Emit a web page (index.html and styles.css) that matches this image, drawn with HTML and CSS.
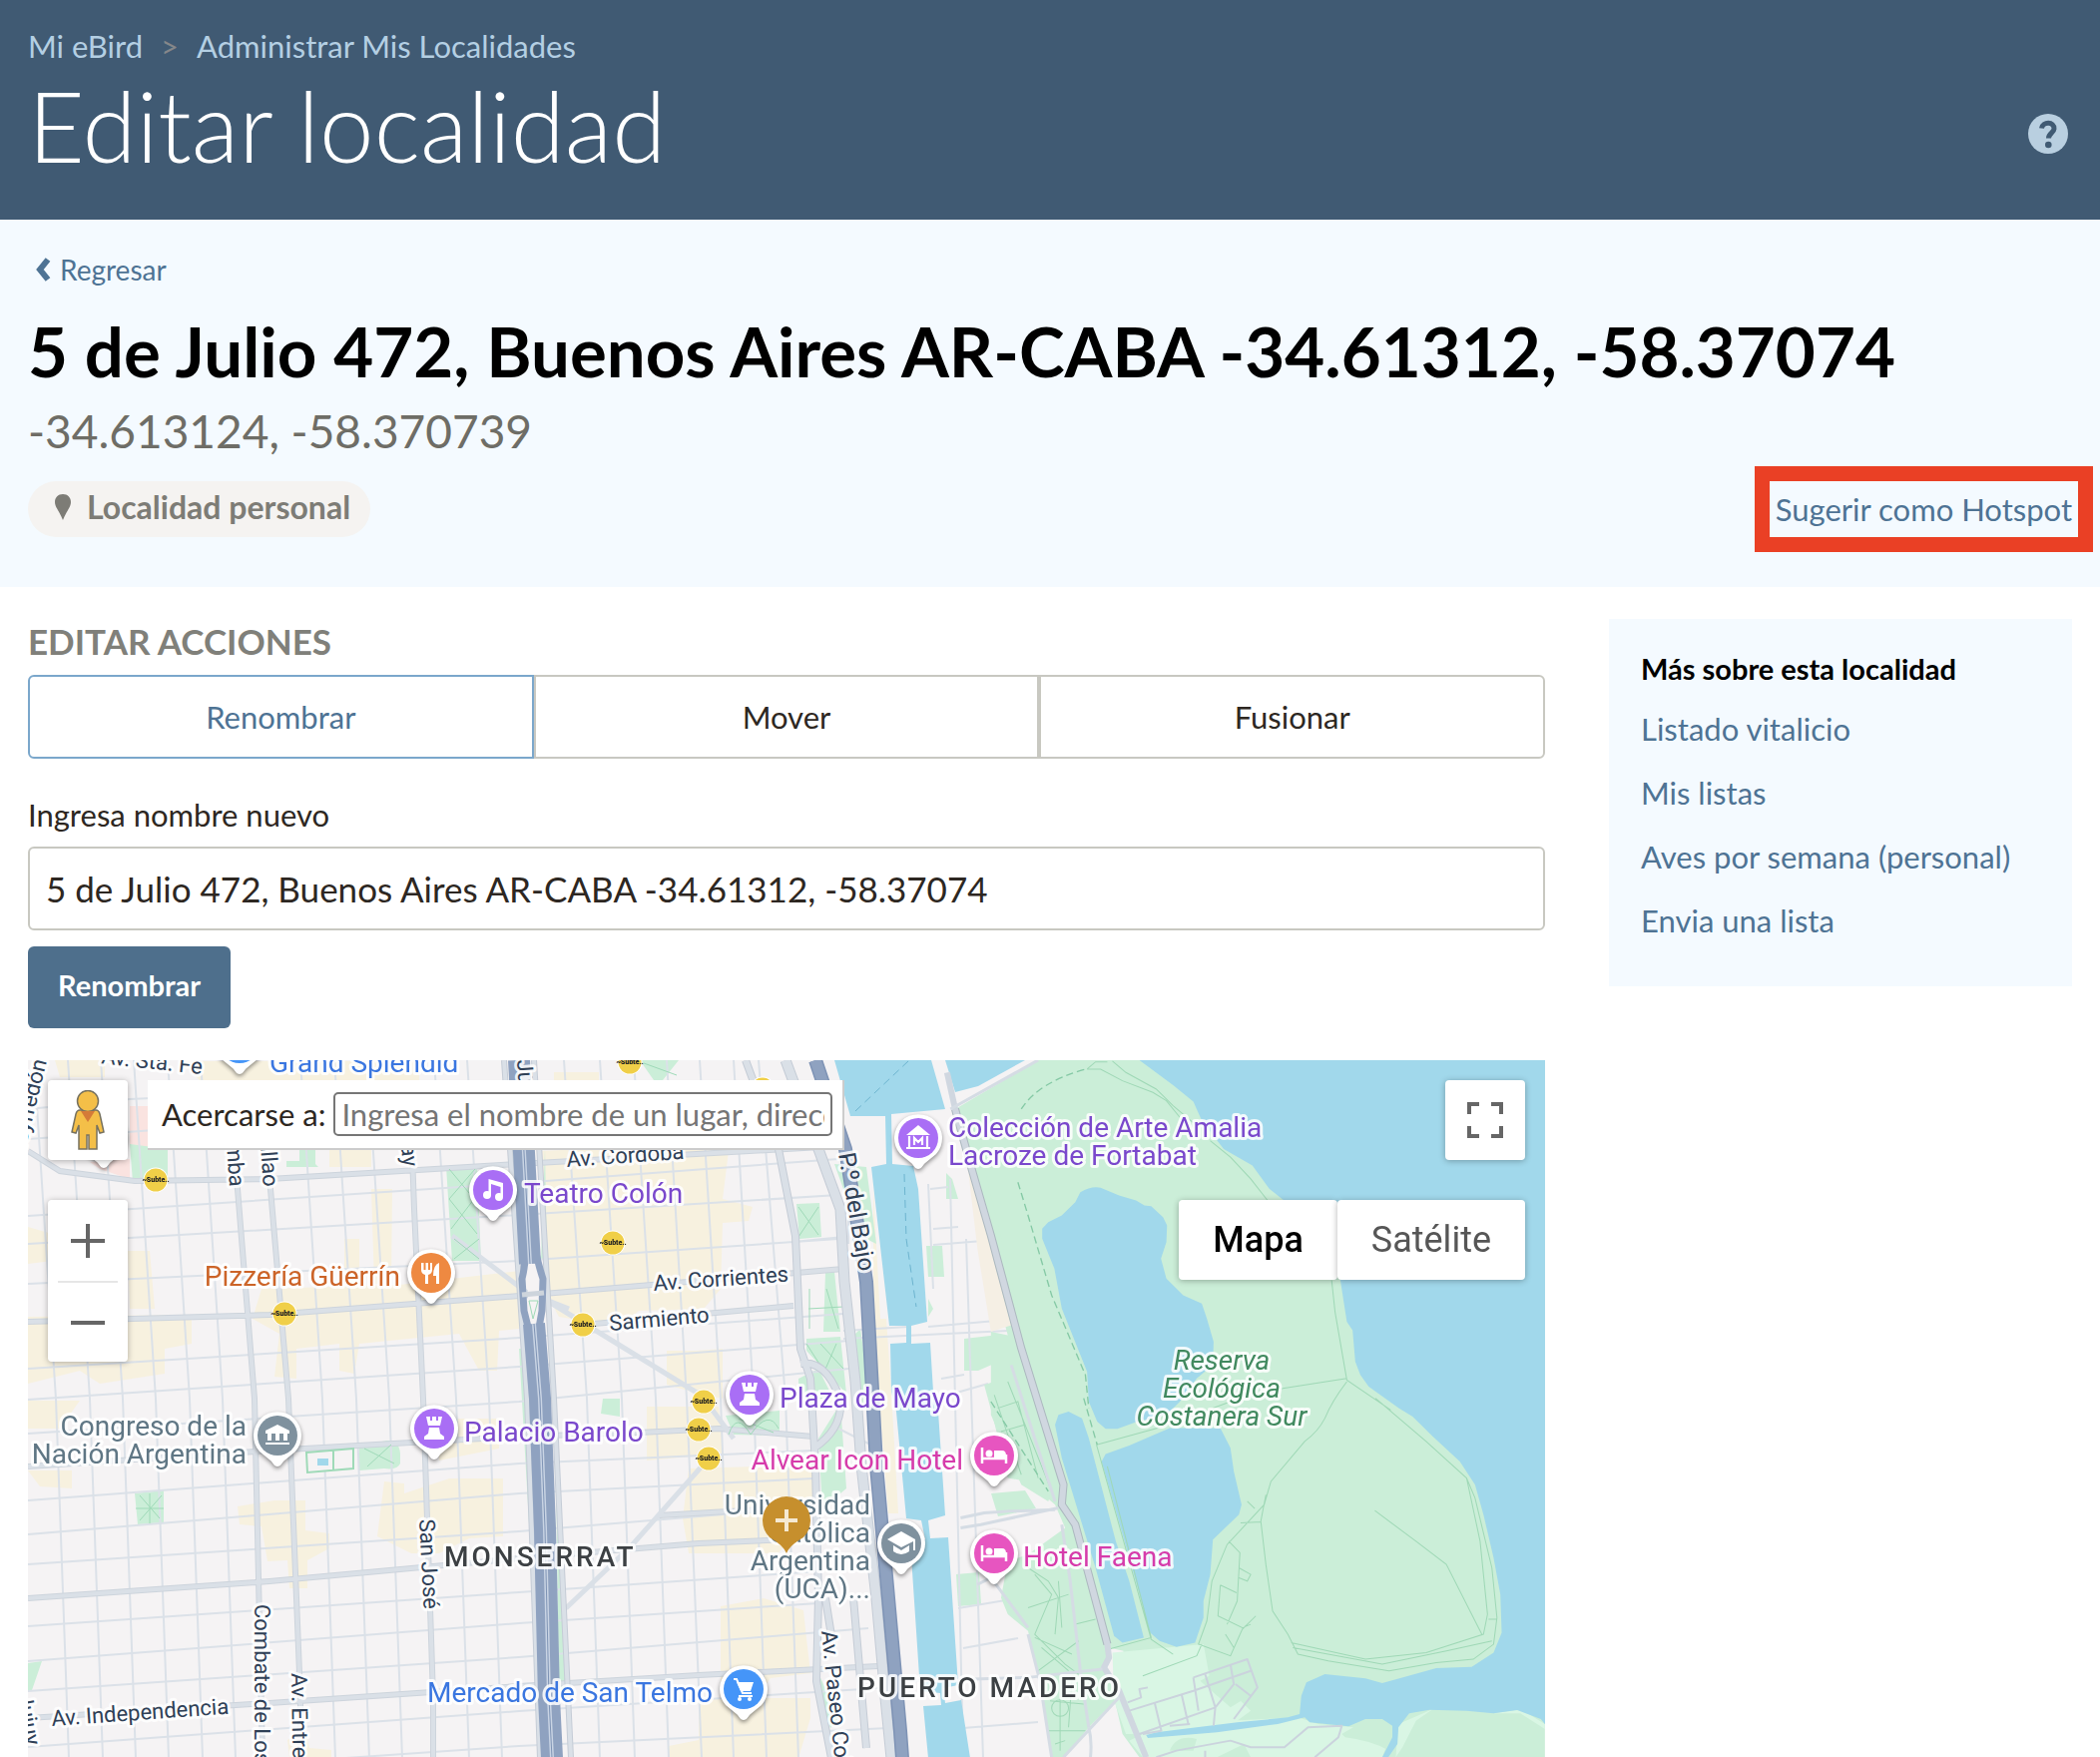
FILE: index.html
```html
<!DOCTYPE html>
<html lang="es">
<head>
<meta charset="utf-8">
<title>Editar localidad - eBird</title>
<meta name="viewport" content="width=device-width, initial-scale=1">
<link rel="stylesheet" href="styles.css">
</head>
<body>
<header class="masthead">
  <div>
    <nav class="crumbs" aria-label="Ruta">
      <a href="#">Mi eBird</a><span class="crumb-sep">&gt;</span><a href="#">Administrar Mis Localidades</a>
    </nav>
    <h1 class="page-title">Editar localidad</h1>
  </div>
  <a class="help" href="#" aria-label="Ayuda">
    <svg viewBox="0 0 40 40" width="40" height="40"><circle cx="20" cy="20" r="20" fill="#b9cfe0"/><path d="M13.500 14.500C14.500 7.500 26.500 7.500 26 15C25.700 19 20.500 19.500 20.500 24.500" fill="none" stroke="#405a73" stroke-width="5"/><circle cx="20.300" cy="31" r="3.300" fill="#405a73"/></svg>
  </a>
</header>

<section class="place">
  <a class="back" href="#"><svg viewBox="0 0 18 24" width="18" height="24"><path d="M14 2L6 12L14 22" fill="none" stroke="#4e7394" stroke-width="6"/></svg>Regresar</a>
  <h2 class="place-name">5 de Julio 472, Buenos Aires AR-CABA -34.61312, -58.37074</h2>
  <p class="place-coords">-34.613124, -58.370739</p>
  <div class="place-row">
    <span class="pill"><svg viewBox="0 0 16 26" width="16" height="26"><path d="M8 0C12.800 0 16 3.500 16 8C16 13 11 18 8 26C5 18 0 13 0 8C0 3.500 3.200 0 8 0Z" fill="#7d7c76"/></svg>Localidad personal</span>
    <a class="suggest" href="#">Sugerir como Hotspot</a>
  </div>
</section>

<div class="columns">
<main class="editor">
  <h3 class="section-title">Editar acciones</h3>
  <div class="tabs">
    <button type="button" class="tab tab-on">Renombrar</button>
    <button type="button" class="tab">Mover</button>
    <button type="button" class="tab">Fusionar</button>
  </div>
  <form class="rename">
    <label for="name">Ingresa nombre nuevo</label>
    <input id="name" type="text" value="5 de Julio 472, Buenos Aires AR-CABA -34.61312, -58.37074">
    <button type="submit" class="submit">Renombrar</button>
  </form>

  <div class="map">
    <svg class="map-canvas" viewBox="28 1061 1520 699" preserveAspectRatio="xMidYMin slice">
      <defs>
        <path id="pin" d="M0 31C-3 31-4 28-7 25L-18 16A24 24 0 1 1 18 16L7 25C4 28 3 31 0 31Z"/>
        <g id="subte"><circle r="12.500" fill="#fff"/><circle r="11.500" fill="#f0cf48"/><text class="subte-text" text-anchor="middle" y="2">~Subte..</text></g>
        <g id="rook"><path d="M-8-12H-4V-8H-2V-12H2V-8H4V-12H8L6-3H-6ZM-5-1H5L6 5L10 8V11H-10V8L-6 5Z" fill="#fff"/></g>
        <g id="bed"><path d="M-12-8V8M12 8V-1M-12 3H12" fill="none" stroke="#fff" stroke-width="2.500"/><path d="M0 3V-5H8Q12-5 12 0V3Z" fill="#fff"/><circle cx="-5" cy="-2" r="3.500" fill="#fff"/></g>
      </defs>
      <rect x="28" y="1061" width="1520" height="699" fill="#f5f3f4"/>

      <g fill="#f7f1df">
        <path d="M28 1318L192 1316V1345L165 1350V1375L100 1385L80 1372L28 1385ZM28 1228L52 1235V1262L28 1265ZM128 1252H150L155 1310H130Z"/>
        <path d="M262 1290L400 1286L520 1272V1330L500 1332L498 1372H480L460 1335L360 1345L355 1375L340 1372V1345L297 1350V1380L275 1378L280 1335L253 1320ZM372 1190H393L392 1285H375ZM345 1240H360V1285H345ZM330 1150H372V1168H330Z"/>
        <path d="M540 1152L700 1145L730 1152L724 1200L754 1208L750 1222L724 1224L722 1290L705 1310L640 1312L620 1328L560 1318L545 1290ZM668 1352H697L724 1350V1400L700 1395L668 1386Z"/>
        <path d="M648 1408H720L725 1455L648 1462ZM690 1470L815 1466L820 1500L780 1555L690 1555L684 1520ZM722 1608L765 1600L805 1612L808 1640L812 1675L772 1680L765 1690L722 1690ZM700 1700H812V1720L800 1760H670V1748L700 1742Z"/>
        <path d="M238 1508L275 1502H306V1532L330 1535V1550L308 1562V1590H290L288 1562L268 1563L262 1528L240 1526ZM385 1483L405 1485V1495L450 1480H504V1538L470 1540L440 1555H412L378 1538ZM28 1402H80L60 1430H28ZM28 1472H72V1490L40 1488ZM435 1420H500V1450L440 1462ZM288 1742L305 1730L310 1750L332 1752V1760H290ZM55 1061H105V1078H60ZM180 1062H420V1081H200ZM555 1073H600V1085H555ZM875 1190L882 1320H888L893 1393L900 1515H890L875 1330Z"/>
      </g>
      <path d="M130 1107H148V1150L130 1145ZM90 1163L130 1160V1180L100 1170Z" fill="#fae3e0"/>
      <g fill="#cbeed8">
        <path d="M447 1167H478L482 1262H453ZM130 1145L168 1150V1180L133 1183ZM135 1495L164 1492V1524L138 1526ZM28 1665L42 1663L32 1692H28ZM300 1150H316V1165L319 1168H287V1162H300ZM604 1400H621V1418L602 1415ZM641 1061H680L664 1081H655ZM798 1205L821 1204L823 1238L801 1240ZM827 1273L836 1273L842 1333H825ZM808 1340L842 1338L848 1395L808 1352ZM800 1380L820 1370L835 1400H800ZM727 1417L781 1412V1437L735 1436ZM820 1440L842 1405L848 1490L824 1510ZM820 1675L840 1720L832 1730L818 1695ZM836 1165L868 1168L878 1245L868 1240L845 1190ZM852 1340L862 1330L872 1400L858 1410Z"/>
        <path d="M360 1447L388 1442Q400 1442 401 1455V1465Q398 1472 385 1470L360 1472ZM928 1247H944L946 1278H930ZM966 1340L1001 1336L996 1365L980 1372H966ZM993 1495L1027 1492L1038 1510L1000 1518ZM958 1576L981 1574L983 1606L960 1608ZM948 1174L954 1180L960 1200H948ZM930 1300L935 1310L930 1318Z"/>
        <path d="M530 1150H514L518 1260H524ZM546 1150L548 1260H542ZM520 1350H526L538 1560H532ZM556 1400L567 1700H560ZM528 1340L533 1430H528Z"/>
      </g>

      <g class="street">
        <path d="M34 1061L56 1400L69 1760M68 1061L90 1400L103 1760M101 1061L123 1400L136 1760M134 1061L156 1400L169 1760M168 1061L190 1400L203 1760M201 1061L223 1400L236 1760M301 1061L323 1400L336 1760M335 1061L357 1400L370 1760M368 1061L390 1400L403 1760M435 1061L457 1400L470 1760M468 1061L490 1400L503 1760M565 1061L588 1400L601 1760M601 1061L623 1400L636 1760M635 1061L657 1400L670 1760M668 1061L688 1400L703 1760M701 1061L722 1400L735 1760M735 1061L755 1400L768 1760M760 1061L787 1400L800 1760"/>
        <path d="M28 1110L130 1100L520 1082M28 1140L240 1125M28 1217L520 1184L840 1160M28 1245L520 1216L840 1196M28 1285L520 1262L840 1240M28 1370L520 1339L845 1315M28 1401L520 1368L850 1342M28 1435L520 1403L850 1370M28 1502L520 1465L815 1452M28 1536L520 1495L815 1480M28 1566L520 1533L820 1508M28 1628L520 1594L820 1573M28 1663L520 1625L820 1605M28 1693L520 1659L870 1630M28 1749L520 1713L880 1690M28 1782L520 1748L890 1730M845 1332L910 1328M930 1328L1020 1320M845 1340L1010 1332M955 1395L990 1385M935 1230L960 1228M932 1190L950 1188M952 1180L965 1760M930 1185L935 1290M968 1240L985 1760M935 1246L985 1242M960 1610L1020 1600M965 1650L1020 1640M965 1730L1040 1724M943 1380L966 1376M795 1243L845 1238M840 1430L870 1445M850 1200L850 1245M790 1110L840 1105"/>
      </g>
      <g class="avenue-edge">
        <path d="M28 1152L60 1172L135 1182L270 1180L520 1165L840 1147M28 1323L270 1316L520 1297L845 1270M584 1326L795 1307M28 1468L270 1452L520 1438L640 1434L720 1430L815 1438M28 1600L270 1583L520 1560L700 1545L815 1540M660 1517L815 1508M28 1720L270 1705L520 1688L700 1677L880 1668M222 1100L238 1190L255 1400L263 1760M262 1100L271 1190L289 1400L301 1700V1760M411 1100L415 1210L424 1400L434 1700V1760"/>
      </g>
      <g class="avenue">
        <path d="M28 1152L60 1172L135 1182L270 1180L520 1165L840 1147M28 1323L270 1316L520 1297L845 1270M584 1326L795 1307M28 1468L270 1452L520 1438L640 1434L720 1430L815 1438M28 1600L270 1583L520 1560L700 1545L815 1540M660 1517L815 1508M28 1720L270 1705L520 1688L700 1677L880 1668M222 1100L238 1190L255 1400L263 1760M262 1100L271 1190L289 1400L301 1700V1760M411 1100L415 1210L424 1400L434 1700V1760"/>
        <path d="M550 1303L703 1397L735 1440M453 1237L527 1293L570 1310M710 1460L633 1547L567 1610" stroke-width="5"/>
      </g>
      <path d="M307 1454L354 1450V1470L308 1474ZM334 1452V1472" fill="#f5f3f4" stroke="#9fdab8" stroke-width="2"/>
      <path d="M318 1460H329V1467H318Z" fill="#a1d8eb"/>
      <path class="trail" d="M450 1170L475 1200L452 1230M476 1170L450 1200L478 1235M455 1240L480 1260M480 1240L455 1260M140 1497L160 1520M162 1497L140 1522M150 1495V1525M136 1510H164M800 1208L820 1236M820 1208L800 1238M365 1450L395 1465M368 1468L392 1446M730 1436Q738 1412 752 1436Q770 1410 780 1430M740 1420L775 1434M828 1290L840 1330M808 1345L840 1395M645 1064L678 1076M810 1310L845 1308M811 1330V1290M822 1345L845 1370M838 1345L825 1375"/>

      <g fill="none" stroke-linejoin="round">
        <g stroke="#c5ccd6">
          <path d="M787 1061L820 1150L842 1210L846 1283L857 1383L863 1467L878 1600L887 1700L893 1760" stroke-width="11"/>
          <path d="M747 1061L780 1150L797 1237L802 1350L812 1380L817 1467L820 1600L818 1683L833 1760M802 1365Q830 1360 845 1410M815 1450Q845 1430 842 1400M827 1600L835 1650M855 1600L868 1750" stroke-width="8"/>
          <path d="M505 1061L528 1400L541 1760M535 1061L555 1400L572 1760" stroke-width="6"/>
        </g>
        <g stroke="#dae0e7">
          <path d="M787 1061L820 1150L842 1210L846 1283L857 1383L863 1467L878 1600L887 1700L893 1760" stroke-width="9"/>
          <path d="M747 1061L780 1150L797 1237L802 1350L812 1380L817 1467L820 1600L818 1683L833 1760M802 1365Q830 1360 845 1410M815 1450Q845 1430 842 1400M827 1600L835 1650M855 1600L868 1750" stroke-width="6"/>
          <path d="M505 1061L528 1400L541 1760M535 1061L555 1400L572 1760" stroke-width="4"/>
        </g>
        <path d="M527 1250Q526 1268 523 1280L525 1312L532 1340M536 1250Q540 1268 544 1280L543 1312L538 1340" stroke="#8fa2c0" stroke-width="7"/>
        <path d="M534 1266L540 1285L539 1308L534 1322L529 1308V1285Z" fill="#f5f3f4"/>
        <path d="M530 1302H539L534 1320Z" fill="#f5f3f4" stroke="#9fdab8"/>
        <path d="M523 1296L545 1294" stroke="#cdd4dc" stroke-width="5"/>
        <path d="M520 1061L531 1265M535 1325L541 1400L546 1530L550 1700L553 1760" stroke="#8fa2c0" stroke-width="22"/>
        <path d="M520 1061L531 1265M535 1325L541 1400L546 1530L550 1700L553 1760" stroke="#c9d4e4" stroke-width="4"/>
        <path d="M520 1061L531 1265M535 1325L541 1400L546 1530L550 1700L553 1760" stroke="#7e93b4" stroke-width="1"/>
        <path d="M817 1061L847 1150L863 1250L868 1283L875 1410L878 1467L890 1600L902 1733L904 1760" stroke="#7e93b5" stroke-width="14"/>
        <path d="M817 1061L847 1150L863 1250L868 1283L875 1410L878 1467L890 1600L902 1733L904 1760" stroke="#8fa2c0" stroke-width="11"/>
      </g>

      <g fill="#a1d8eb">
        <path d="M836 1061H933L947 1110L893 1115L894 1165L915 1167L920 1190L929 1323L913 1327V1345L932 1344L935 1393L940 1413L947 1517L930 1522L932 1540L950 1539L960 1687L945 1690L947 1705L963 1702L972 1760H930L925 1708L943 1707L942 1695L922 1693L912 1543L927 1541L923 1522L908 1520L898 1413L893 1393L892 1345L908 1344V1327L891 1327L873 1168L888 1165L887 1117L852 1117Z"/>
        <path d="M947 1061H1027L980 1087L957 1093Z"/>
      </g>
      <path d="M857 1112L911 1061M906 1175L908 1240L918 1308" fill="none" stroke="#6db4cf" stroke-width="1" stroke-dasharray="8 5"/>

      <g transform="translate(1030 1050) scale(.338 .333)">
        <path d="M-216 180L30 33H1532V2130H330L280 2060L255 1950L283 1810L240 1800L230 1860L270 1950L180 2040L110 2130H70L30 1880L0 1750L-60 1700L-80 1650L-60 1540L0 1520L110 1440L80 1370L0 1300L-60 1290L-110 1080L-30 980Z" fill="#cbeed8"/>
        <path d="M-130 1010L-40 980L20 1300L-60 1270Z" fill="#cbeed8"/>
        <path d="M250 1815L520 1790L540 1900L600 1930L660 1990L620 2020L350 2060L290 2060L255 1960ZM400 2030L800 2010L860 2030L1080 2050L1050 2130H340L300 2080ZM1090 2130L1098 2030L1200 1985L1150 2020L1110 2100ZM1380 1998L1460 1985L1532 2030V2045L1460 1998Z" fill="#d9f6e4"/>
        <path d="M510 1900L600 1850L680 1930L600 1980ZM930 2060L980 2030Q1080 2000 1080 2050L1070 2110Q1020 2080 940 2070ZM420 2110Q440 2060 500 2075L490 2110ZM560 2130L640 2090L660 2130Z" fill="#cbeed8"/>
        <path d="M330 33L430 108L490 158L515 215L580 300L665 350L715 420L755 452L900 560L925 690L945 820L962 845L970 940L985 980L1010 1015L1100 1080L1140 1105L1200 1165L1280 1240L1325 1310L1350 1400L1380 1530L1400 1640L1404 1755L1380 1815L1315 1858L1210 1862L1050 1907L1000 1893L880 1880L825 1905L810 1945L805 2000L770 2010L620 2025L380 2055L350 2063L355 2072L560 2055L740 2030L820 2010L835 2025L950 2037L1000 2015L1050 2015L1080 2035L1080 2070L1050 2130H1068L1095 2090L1098 2040L1130 1998L1190 1987L1300 1990L1380 1998L1450 1988L1520 2015L1540 2040V33Z" fill="#a1d8eb"/>
        <g fill="#a1d8eb">
          <path d="M42 540L60 520L100 500L140 460L155 430Q190 410 215 417L270 440L320 455L345 470L365 472L400 505L412 530L410 580L394 630L410 690L460 740L515 765L530 810L550 880L548 950L500 990L450 1060L420 1090L380 1110L330 1118L265 1142L230 1142L205 1120L180 1060L175 970L100 780L78 660L42 570Z"/>
          <path d="M80 1130L90 1100L120 1090L160 1110L180 1170L260 1480L300 1600L343 1770L280 1785L255 1765L200 1560L100 1230Z"/>
          <path d="M218 1240L230 1218L300 1192L420 1140L570 1140L600 1200L610 1270L633 1370L625 1400L548 1475L540 1580L520 1660V1710L495 1785L440 1798L390 1780L362 1755L300 1530Z"/>
        </g>
        <path d="M-204 180L-150 200L-120 400L0 900L25 1050L75 1310L60 1360L-20 1310L-110 1100L-110 850L-60 860L-140 560Z" fill="#cbeed8"/>
        <path d="M-185 300L-150 450L-50 830L-110 850L-150 600Z" fill="#f5efe4"/>
        <g fill="none" stroke="#9fd8b6" stroke-width="3">
          <path d="M175 60L200 38H235M250 36L290 70L380 120L430 170L500 230M175 60L215 60L280 95L370 130L410 155L450 205M540 275L600 325L660 390L710 455M900 695L910 790L945 995L1075 1085M945 990L755 1020L600 1060L400 1135L203 1190M945 1000Q900 1060 880 1110Q860 1150 820 1180L720 1300L700 1370L590 1490L545 1600L530 1720L505 1790L600 1825L635 1745L675 1705M705 1340L690 1420L705 1550L725 1690L770 1760L800 1820L890 1840L1070 1870L1210 1845L1320 1835L1380 1790L1390 1710L1375 1560L1325 1350L1300 1290L1180 1180L1030 1050M780 1785L1000 1835L1180 1815L1350 1760L1362 1700L1340 1480L1300 1290M1028 1388L1150 1480L1240 1550L1345 1760M595 1480L628 1515L620 1660L590 1730M570 1612L618 1635M570 1612L563 1705L635 1740L660 1730M585 1760L610 1800M203 1190L365 1775L430 1820M235 1255L365 1770L240 1805M340 1885L500 1825L515 1790M625 1560L660 1580L650 1600L625 1590M785 1800L1050 1850L1240 1810L1375 1780M1365 1715H1390M630 1425L690 1422M650 1360L672 1382"/>
          <path d="M0 1560L60 1600L90 1650L80 1760M20 1580L70 1640L20 1760L110 1850L150 1880M0 1680L120 1640M90 1600L100 1740M20 1770L130 1820M40 1800L120 1870M140 1730L200 1715M30 1870L150 1780M60 2050H170M65 1960L165 1970M80 2090L110 2080M95 1900V2110M130 1900L120 2040M-100 1040L-20 1280M-90 1080L-30 1060L30 1290M-60 1000L70 1330M-80 1150L-10 1130"/>
          <circle cx="95" cy="1982" r="25"/>
        </g>
        <path d="M-20 180Q30 100 170 60M-30 400L0 500L70 740L170 980L180 1080M165 1050L205 1190M-110 1060L60 1330" fill="none" stroke="#85c9a5" stroke-width="4" stroke-dasharray="22 12"/>
        <g fill="none" stroke-linejoin="round">
          <path d="M-216 180L-170 350L-110 560L-20 900L35 1080L105 1310L100 1370L140 1430L235 1790" stroke="#acb8bf" stroke-width="24"/>
          <path d="M-240 70L-216 180L-170 350L-110 560L-20 900L35 1080L105 1310L100 1370L140 1430L235 1790L240 1830L225 1860L270 1930L350 2130" stroke="#d0d7e0" stroke-width="18"/>
          <path d="M-230 180L30 33M-50 950L80 1360M-200 1440L-140 1430L90 1380M-200 1410L-130 1395L-60 1390L80 1385M100 1430L125 1600L155 1870L180 2040M0 1760L35 1900L70 2130M-350 1900L0 1890L220 1865M270 1950L105 2130M180 2040Q190 2080 185 2130M-150 1610L-110 1590L0 1740" stroke="#d5dce4" stroke-width="9"/>
          <path d="M300 1990L490 1930L660 1870M330 2060L555 1980L610 1910L600 1850M375 1965L395 2050L340 2060M455 1940L475 2030M490 1890L650 1835L680 1920L610 2015M525 1880L555 1980L550 2035M490 1890L505 1990M295 1965L335 1950L330 1925L355 1920M615 1910L660 1945M420 2035L480 2030M380 2130L440 2110L600 2080L660 2100L760 2100L830 2040L930 2035L920 2070L850 2130M525 2110V2130" stroke="#cbd3dd" stroke-width="6"/>
        </g>
      </g>

      <g class="label road">
        <text transform="translate(655 1292) rotate(-4)">Av. Corrientes</text>
        <text transform="translate(611 1332) rotate(-5)">Sarmiento</text>
        <text transform="translate(568 1168) rotate(-4)">Av. Córdoba</text>
        <text transform="translate(52 1728) rotate(-4)">Av. Independencia</text>
        <text transform="translate(420 1521) rotate(87)">San José</text>
        <text transform="translate(255 1606) rotate(90)">Combate de Los Pozos</text>
        <text transform="translate(292 1675) rotate(89)">Av. Entre Ríos</text>
        <text transform="translate(823 1633) rotate(84)">Av. Paseo Colón</text>
        <text class="road-major" transform="translate(840 1155) rotate(80)">P.º del Bajo</text>
        <text text-anchor="end" transform="translate(230 1188) rotate(86)">Riobamba</text>
        <text text-anchor="end" transform="translate(264 1188) rotate(86)">Callao</text>
        <text text-anchor="end" transform="translate(404 1168) rotate(84)">Uruguay</text>
        <text text-anchor="end" transform="translate(47 1062) rotate(-76)">Pueyrredón</text>
        <text text-anchor="end" transform="translate(202 1075) rotate(6)">Av. Sta. Fe</text>
        <text transform="translate(518 1061) rotate(86)">Julio</text>
        <text text-anchor="end" transform="translate(26 1748) rotate(80)">Jujuy</text>
      </g>

      <g class="pins">
        <use href="#pin" x="240" y="1044"/><use href="#pin" x="104" y="1138"/><use href="#pin" x="494" y="1191"/><use href="#pin" x="432" y="1274"/><use href="#pin" x="920" y="1139"/><use href="#pin" x="751" y="1396"/><use href="#pin" x="435" y="1430"/><use href="#pin" x="278" y="1437"/><use href="#pin" x="996" y="1457"/><use href="#pin" x="996" y="1555"/><use href="#pin" x="903" y="1545"/><use href="#pin" x="745" y="1691"/>
      </g>
      <circle cx="240" cy="1044" r="20" fill="#4595f8"/>
      <circle cx="104" cy="1138" r="20" fill="#7f919e"/>
      <circle cx="494" cy="1191" r="20" fill="#a96ef5"/>
      <g transform="translate(494 1191)" fill="#fff"><circle cx="-6" cy="5" r="4"/><circle cx="6" cy="7" r="4"/><path d="M-4.500 5V-11L10-7V7H7.500V-3L-2-6V5Z"/></g>
      <circle cx="432" cy="1274" r="20" fill="#ee8941"/>
      <path d="M422 1264V1271Q422 1275 426 1276V1285H429V1276Q433 1275 433 1271V1264H431V1271H429V1264H426.500V1271H424.500V1264ZM440 1264Q434 1266 434 1277H437V1285H440Z" fill="#fff"/>
      <circle cx="920" cy="1139" r="20" fill="#a96ef5"/>
      <path d="M911 1137V1149M929 1137V1149M908 1149H932M916 1146V1139L920 1143L924 1139V1146" fill="none" stroke="#fff" stroke-width="2.200"/>
      <path d="M908 1136L920 1126L932 1136Z" fill="#fff"/>
      <circle cx="751" cy="1396" r="20" fill="#a96ef5"/><use href="#rook" x="751" y="1396"/>
      <circle cx="435" cy="1430" r="20" fill="#a96ef5"/><use href="#rook" x="435" y="1430"/>
      <circle cx="278" cy="1437" r="20" fill="#7f919e"/>
      <path d="M266 1432L278 1426L290 1432V1435H266ZM268 1435H272V1442H268ZM276 1435H280V1442H276ZM284 1435H288V1442H284ZM266 1444H290V1446H266Z" fill="#fff"/>
      <circle cx="996" cy="1457" r="20" fill="#e755c0"/><use href="#bed" x="996" y="1457"/>
      <circle cx="996" cy="1555" r="20" fill="#e755c0"/><use href="#bed" x="996" y="1555"/>
      <circle cx="903" cy="1545" r="20" fill="#7f919e"/>
      <path d="M889 1541L903 1533L917 1541V1552H915V1543L903 1549ZM895 1547L903 1552L911 1547V1553Q903 1559 895 1553Z" fill="#fff"/>
      <circle cx="745" cy="1691" r="20" fill="#4595f8"/>
      <path d="M735 1681H738L744 1695H753M740 1698H754" fill="none" stroke="#fff" stroke-width="2"/><path d="M738 1684H755L752 1693H742Z" fill="#fff"/><circle cx="741" cy="1701" r="2" fill="#fff"/><circle cx="751" cy="1701" r="2" fill="#fff"/>

      <use href="#subte" x="156" y="1181"/><use href="#subte" x="285" y="1315"/><use href="#subte" x="631" y="1063"/><use href="#subte" x="764" y="1090"/><use href="#subte" x="614" y="1244"/><use href="#subte" x="584" y="1326"/><use href="#subte" x="705" y="1403"/><use href="#subte" x="700" y="1431"/><use href="#subte" x="710" y="1460"/>

      <g class="label poi">
        <text class="violet" x="525" y="1204">Teatro Colón</text>
        <text class="violet" x="950" y="1138">Colección de Arte Amalia</text>
        <text class="violet" x="950" y="1166">Lacroze de Fortabat</text>
        <text class="violet" x="781" y="1409">Plaza de Mayo</text>
        <text class="violet" x="465" y="1443">Palacio Barolo</text>
        <text class="orange" x="401" y="1287" text-anchor="end">Pizzería Güerrín</text>
        <text class="slate" x="247" y="1437" text-anchor="end">Congreso de la</text>
        <text class="slate" x="247" y="1465" text-anchor="end">Nación Argentina</text>
        <text class="slate" x="872" y="1516" text-anchor="end">Universidad</text>
        <text class="slate" x="872" y="1544" text-anchor="end">Católica</text>
        <text class="slate" x="872" y="1572" text-anchor="end">Argentina</text>
        <text class="slate" x="872" y="1600" text-anchor="end">(UCA)...</text>
        <text class="pink" x="965" y="1471" text-anchor="end">Alvear Icon Hotel</text>
        <text class="pink" x="1025" y="1568">Hotel Faena</text>
        <text class="blue" x="714" y="1704" text-anchor="end">Mercado de San Telmo</text>
        <text class="blue" x="270" y="1073">Grand Splendid</text>
        <text class="reserve" x="1224" y="1371" text-anchor="middle">Reserva</text>
        <text class="reserve" x="1224" y="1399" text-anchor="middle">Ecológica</text>
        <text class="reserve" x="1224" y="1427" text-anchor="middle">Costanera Sur</text>
        <text class="district" x="445" y="1568">MONSERRAT</text>
        <text class="district" x="859" y="1699">PUERTO MADERO</text>
      </g>
      <path d="M788 1555Q785 1547 771 1539A24 24 0 1 1 805 1539Q791 1547 788 1555Z" fill="#c68f2d"/>
      <path d="M777 1522H799M788 1511V1533" stroke="#f5e9d2" stroke-width="4"/>
    </svg>

    <button type="button" class="ctl pegman" aria-label="Arrastra el hombrecito naranja al mapa">
      <svg viewBox="0 0 34 60" width="34" height="60"><g fill="#f4bf48" stroke="#77725f" stroke-width="1.500"><path d="M9 20H25Q28 20 29 24L33 42L29 43L26 35V59H18V45H16V59H8V35L5 43L1 42L5 24Q6 20 9 20Z"/><circle cx="17" cy="11" r="10.500"/></g><path d="M10 21H24L17 32Z" fill="#d47b38"/></svg>
    </button>
    <div class="ctl zoom">
      <button type="button" aria-label="Acercar"><svg viewBox="0 0 34 34" width="34" height="34"><path d="M0 17H34M17 0V34" stroke="#666" stroke-width="4"/></svg></button>
      <button type="button" aria-label="Alejar"><svg viewBox="0 0 34 34" width="34" height="34"><path d="M0 17H34" stroke="#666" stroke-width="4"/></svg></button>
    </div>
    <div class="search">
      <label for="near">Acercarse a:</label>
      <input id="near" type="text" placeholder="Ingresa el nombre de un lugar, dirección">
    </div>
    <button type="button" class="ctl full" aria-label="Pantalla completa">
      <svg viewBox="0 0 36 36" width="36" height="36"><path d="M2 12V2H12M24 2H34V12M34 24V34H24M12 34H2V24" fill="none" stroke="#666" stroke-width="4"/></svg>
    </button>
    <div class="types">
      <button type="button" class="ctl type type-on">Mapa</button>
      <button type="button" class="ctl type">Satélite</button>
    </div>
  </div>
</main>

<aside class="more">
  <h4>Más sobre esta localidad</h4>
  <ul>
    <li><a href="#">Listado vitalicio</a></li>
    <li><a href="#">Mis listas</a></li>
    <li><a href="#">Aves por semana (personal)</a></li>
    <li><a href="#">Envia una lista</a></li>
  </ul>
</aside>
</div>
</body>
</html>
```
FILE: styles.css
```css
*, *::before, *::after { box-sizing: border-box; }
body {
  margin: 0;
  min-height: 100vh;
  display: flex;
  flex-direction: column;
  background: #fff;
  color: #2d2722;
  font-family: Lato, "Open Sans", sans-serif;
  font-size: 31px;
  line-height: 40px;
}
h1, h2, h3, h4, p, ul { margin: 0; padding: 0; }
ul { list-style: none; }
a { color: #4e7394; text-decoration: none; }
button, input { font: inherit; color: inherit; margin: 0; }
button { cursor: pointer; }
svg { display: block; flex: none; }

.masthead {
  display: flex;
  justify-content: space-between;
  align-items: center;
  height: 220px;
  padding: 0 32px 0 28px;
  background: #405a73;
}
.masthead > div { padding-bottom: 10px; }
.help { margin-top: 48px; }
.crumbs { display: flex; gap: 18px; }
.crumbs a { color: #b4cfe3; }
.crumb-sep { color: #85878a; }
.page-title {
  color: #fff;
  font-size: 98px;
  font-weight: 300;
  line-height: 118px;
}

.place { padding: 30px 28px 50px; background: #f4faff; }
.back {
  display: flex;
  align-items: center;
  gap: 8px;
  width: max-content;
  padding-left: 6px;
  font-size: 28px;
}
.place-name {
  margin-top: 18px;
  color: #000;
  font-size: 69px;
  font-weight: 700;
  line-height: 88px;
}
.place-coords { color: #6e6d66; font-size: 46px; line-height: 56px; padding-top: 8px; }
.place-row {
  display: flex;
  justify-content: space-between;
  align-items: center;
  margin-top: 22px;
}
.pill {
  display: flex;
  align-items: center;
  gap: 16px;
  height: 56px;
  padding: 0 20px 4px 27px;
  border-radius: 28px;
  background: #f5f3f1;
  color: #7d7c76;
  font-size: 32px;
  font-weight: 700;
}
.suggest { outline: 15px solid #ea4025; outline-offset: 6px; line-height: 44px; }

.columns {
  flex: 1;
  display: grid;
  grid-template-columns: minmax(0, 1fr) 464px;
  gap: 64px;
  align-items: start;
  padding: 32px 28px 0;
}
.editor { display: flex; flex-direction: column; align-self: stretch; }
.section-title {
  color: #80807a;
  font-size: 35px;
  font-weight: 700;
  line-height: 44px;
  text-transform: uppercase;
}
.tabs { display: flex; margin-top: 12px; }
.tab {
  flex: 1;
  height: 84px;
  border: 2px solid #c8c8c1;
  background: #fff;
}
.tab:first-child { border-radius: 6px 0 0 6px; }
.tab:last-child { border-radius: 0 6px 6px 0; }
.tab-on { border-color: #7ba7cb; color: #4e7394; }
.rename { display: flex; flex-direction: column; align-items: flex-start; }
.rename label { margin: 36px 0 12px; }
.rename input {
  width: 100%;
  height: 84px;
  padding: 0 16px;
  border: 2px solid #c8c8c1;
  border-radius: 6px;
  background: #fff;
  font-size: 35px;
}
.submit {
  height: 82px;
  margin-top: 16px;
  padding: 0 30px 4px;
  border: 0;
  border-radius: 6px;
  background: #4e6f8c;
  color: #fff;
  font-size: 29px;
  font-weight: 700;
}

.more { padding: 30px 32px 38px; background: #f4faff; }
.more h4 { color: #000; font-size: 29px; font-weight: 700; }
.more li { margin-top: 24px; }
.more h4 + ul li:first-child { margin-top: 20px; }
.more ul { padding-bottom: 8px; }

.map {
  position: relative;
  flex: 1;
  min-height: 699px;
  margin-top: 32px;
  overflow: hidden;
  font-family: Roboto, sans-serif;
}
.map-canvas { position: absolute; inset: 0; width: 100%; height: 100%; }
.street { fill: none; stroke: #dbe1e8; stroke-width: 2; }
.avenue-edge { fill: none; stroke: #cdd4dc; stroke-width: 6; }
.avenue { fill: none; stroke: #dae0e7; stroke-width: 4; }
.trail { fill: none; stroke: #9fdab8; stroke-width: 1; }
.pins { fill: #fff; filter: drop-shadow(0 2px 2px rgba(0, 0, 0, .45)); }
.label text {
  stroke: rgba(255, 255, 255, .85);
  stroke-width: 6px;
  stroke-linejoin: round;
  paint-order: stroke;
}
.road { font-size: 22px; fill: #2f4056; }
.road-major { font-size: 24px; }
.poi { font-size: 28px; }
.violet { fill: #7a48cc; }
.orange { fill: #cc6428; }
.slate { fill: #5f7684; }
.pink { fill: #d63cab; }
.blue { fill: #3a76e0; }
.reserve { fill: #41895f; font-style: italic; }
.district { fill: #3c4043; font-weight: 500; letter-spacing: 3px; }
.subte-text { font-size: 7px; font-weight: 900; fill: #222; }

.ctl {
  border: 0;
  border-radius: 4px;
  background: #fff;
  box-shadow: 0 1px 6px rgba(0, 0, 0, .3);
}
.pegman, .full {
  position: absolute;
  top: 20px;
  display: grid;
  place-items: center;
  width: 80px;
  height: 80px;
  padding: 0;
}
.pegman { left: 20px; }
.full { right: 20px; }
.zoom { position: absolute; left: 20px; top: 140px; width: 80px; padding: 0 10px; }
.zoom button {
  display: grid;
  place-items: center;
  width: 60px;
  height: 81px;
  padding: 0;
  border: 0;
  background: none;
}
.zoom button + button { border-top: 2px solid #e6e6e6; }
.search {
  position: absolute;
  left: 120px;
  top: 20px;
  display: flex;
  align-items: center;
  gap: 8px;
  height: 70px;
  padding: 0 10px 0 14px;
  border: solid #ccc;
  border-width: 0 2px 2px 0;
  background: #fff;
  font-family: Lato, "Open Sans", sans-serif;
}
.search input {
  width: 500px;
  height: 44px;
  padding: 0 6px;
  border: 2px solid #767676;
  border-radius: 5px;
  background: #fff;
}
.search input::placeholder { color: #757575; opacity: 1; }
.types { position: absolute; right: 20px; top: 140px; display: flex; }
.type { height: 80px; padding: 0 34px; color: #565656; font-size: 36px; }
.type-on { color: #000; font-weight: 500; }
```
